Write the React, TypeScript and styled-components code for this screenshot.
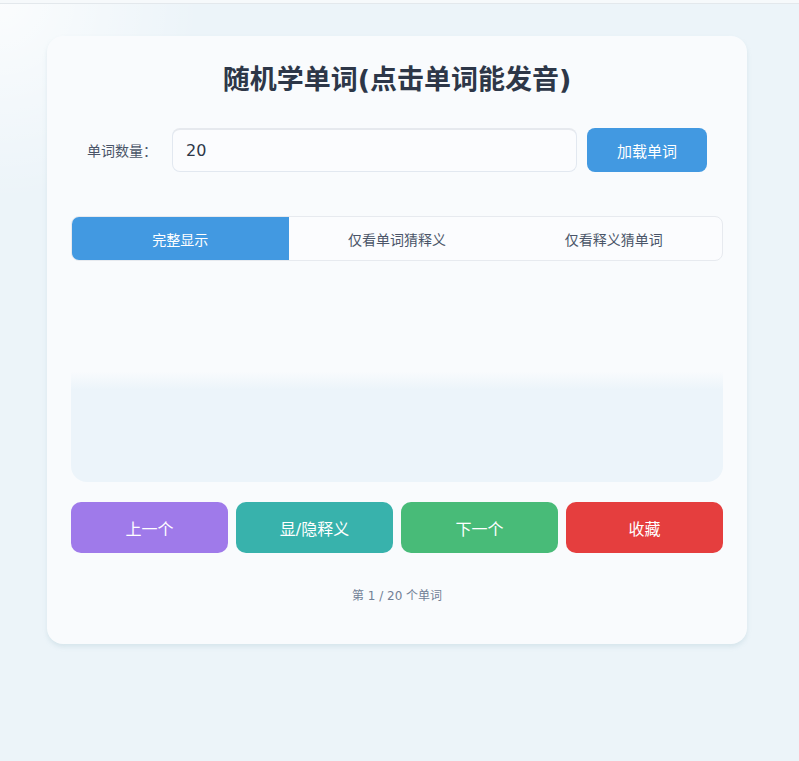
import React, { useState } from "react";
import styled, { createGlobalStyle } from "styled-components";

const GlobalStyle = createGlobalStyle`
  html, body {
    margin: 0;
    padding: 0;
  }
  body {
    min-height: 761px;
    background-color: #ecf4f9;
    background-image: radial-gradient(circle at 0 0, rgba(255, 255, 255, 0.8), rgba(255, 255, 255, 0) 200px);
    border-top: 3px solid #f6f9fb;
    box-shadow: inset 0 1px 0 #e3e8ec;
    font-family: "DejaVu Sans", "Noto Sans CJK SC", sans-serif;
  }
`;

const modes = ["完整显示", "仅看单词猜释义", "仅看释义猜单词"];

const Page = styled.div`
  padding: 33px 0 40px;
`;

const Card = styled.div`
  width: 700px;
  margin: 0 auto 0 47px;
  box-sizing: border-box;
  padding: 24px 24px 41px;
  background: #f9fbfd;
  border-radius: 16px;
  box-shadow: 0 3px 4px rgba(170, 200, 210, 0.3);
`;

const Title = styled.h1`
  margin: 0 0 28px;
  text-align: center;
  font-size: 27px;
  line-height: 40px;
  font-weight: 700;
  color: #2d3748;
`;

const LoadRow = styled.div`
  display: flex;
  justify-content: center;
  align-items: center;
  height: 44px;
`;

const Label = styled.label`
  font-size: 14px;
  color: #4a5568;
  margin-right: 15px;
`;

const CountInput = styled.input`
  width: 405px;
  height: 44px;
  box-sizing: border-box;
  padding: 0 13px;
  border: 1px solid #e2e8f0;
  border-top: 2px solid #e6e9ee;
  border-radius: 8px;
  background: #fbfcfe;
  font-family: inherit;
  font-size: 16px;
  color: #2d3748;
  outline: none;
`;

const LoadButton = styled.button`
  width: 120px;
  height: 44px;
  margin-left: 10px;
  border: none;
  border-radius: 8px;
  background: #4299e1;
  color: #fff;
  font-family: inherit;
  font-size: 15px;
`;

const Tabs = styled.div`
  display: grid;
  grid-template-columns: repeat(3, 1fr);
  margin-top: 44px;
  height: 45px;
  box-sizing: border-box;
  border: 1px solid #e7eaef;
  border-radius: 8px;
  overflow: hidden;
  background: #fbfcfe;
`;

const Tab = styled.button<{ $active: boolean }>`
  border: none;
  background: ${(p) => (p.$active ? "#4299e1" : "transparent")};
  color: ${(p) => (p.$active ? "#fff" : "#4a5568")};
  font-family: inherit;
  font-size: 14px;
  padding: 0;
`;

const WordBox = styled.div`
  margin-top: 20px;
  height: 201px;
  border-radius: 0 0 16px 16px;
  background: linear-gradient(
    to bottom,
    rgba(236, 244, 250, 0) 0%,
    rgba(236, 244, 250, 0) 45%,
    #ecf4fa 54%,
    #ecf4fa 100%
  );
`;

const Actions = styled.div`
  display: grid;
  grid-template-columns: repeat(4, 1fr);
  gap: 8px;
  margin-top: 20px;
`;

const ActionButton = styled.button<{ $color: string }>`
  height: 51px;
  border: none;
  border-radius: 10px;
  background: ${(p) => p.$color};
  color: #fff;
  font-family: inherit;
  font-size: 16px;
`;

const Progress = styled.div`
  margin-top: 33px;
  text-align: center;
  font-size: 12px;
  color: #718096;
`;

export default function App() {
  const [count, setCount] = useState("20");
  const [mode, setMode] = useState(0);

  return (
    <>
      <GlobalStyle />
      <Page>
        <Card>
          <Title>随机学单词(点击单词能发音)</Title>
          <LoadRow>
            <Label>单词数量：</Label>
            <CountInput value={count} onChange={(e) => setCount(e.target.value)} />
            <LoadButton>加载单词</LoadButton>
          </LoadRow>
          <Tabs>
            {modes.map((m, i) => (
              <Tab key={m} $active={mode === i} onClick={() => setMode(i)}>
                {m}
              </Tab>
            ))}
          </Tabs>
          <WordBox />
          <Actions>
            <ActionButton $color="#9f7aea">上一个</ActionButton>
            <ActionButton $color="#38b2ac">显/隐释义</ActionButton>
            <ActionButton $color="#48bb78">下一个</ActionButton>
            <ActionButton $color="#e53e3e">收藏</ActionButton>
          </Actions>
          <Progress>第 1 / {count} 个单词</Progress>
        </Card>
      </Page>
    </>
  );
}
